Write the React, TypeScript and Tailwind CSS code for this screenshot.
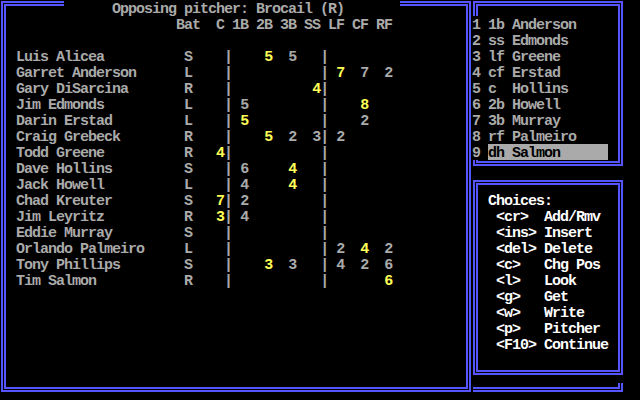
import React from 'react';

type Seg = [number, string, string?];

const Y = 'text-[#ffff55]';

function TextLine({ from, segs, className = '' }: { from: number; segs: Seg[]; className?: string }) {
  let cur = from;
  const out: React.ReactNode[] = [];
  segs.forEach(([c, t, cls], i) => {
    if (c > cur) out.push(<span key={'s' + i}>{' '.repeat(c - cur)}</span>);
    out.push(
      <span key={'t' + i} className={cls}>
        {t}
      </span>
    );
    cur = c + t.length;
  });
  return <div className={'h-4 pt-[2px] whitespace-pre ' + className}>{out}</div>;
}

const POS_COLS = [27, 30, 33, 36, 39, 42, 45, 48];

const players: [string, string, [number, string, number][]][] = [
  ['Luis Alicea', 'S', [[2, '5', 1], [3, '5', 0]]],
  ['Garret Anderson', 'L', [[5, '7', 1], [6, '7', 0], [7, '2', 0]]],
  ['Gary DiSarcina', 'R', [[4, '4', 1]]],
  ['Jim Edmonds', 'L', [[1, '5', 0], [6, '8', 1]]],
  ['Darin Erstad', 'L', [[1, '5', 1], [6, '2', 0]]],
  ['Craig Grebeck', 'R', [[2, '5', 1], [3, '2', 0], [4, '3', 0], [5, '2', 0]]],
  ['Todd Greene', 'R', [[0, '4', 1]]],
  ['Dave Hollins', 'S', [[1, '6', 0], [3, '4', 1]]],
  ['Jack Howell', 'L', [[1, '4', 0], [3, '4', 1]]],
  ['Chad Kreuter', 'S', [[0, '7', 1], [1, '2', 0]]],
  ['Jim Leyritz', 'R', [[0, '3', 1], [1, '4', 0]]],
  ['Eddie Murray', 'S', []],
  ['Orlando Palmeiro', 'L', [[5, '2', 0], [6, '4', 1], [7, '2', 0]]],
  ['Tony Phillips', 'S', [[2, '3', 1], [3, '3', 0], [5, '4', 0], [6, '2', 0], [7, '6', 0]]],
  ['Tim Salmon', 'R', [[7, '6', 1]]],
];

function playerSegs(name: string, bat: string, marks: [number, string, number][]): Seg[] {
  const segs: Seg[] = [
    [2, name],
    [23, bat],
    [28, '|'],
    [40, '|'],
  ];
  marks.forEach(([p, d, y]) => segs.push([POS_COLS[p], d, y ? Y : undefined]));
  segs.sort((a, b) => a[0] - b[0]);
  return segs;
}

const lineup: [string, string, string][] = [
  ['1', '1b', 'Anderson'],
  ['2', 'ss', 'Edmonds'],
  ['3', 'lf', 'Greene'],
  ['4', 'cf', 'Erstad'],
  ['5', 'c ', 'Hollins'],
  ['6', '2b', 'Howell'],
  ['7', '3b', 'Murray'],
  ['8', 'rf', 'Palmeiro'],
  ['9', 'dh', 'Salmon'],
];

const choices = [
  ' <cr>  Add/Rmv',
  ' <ins> Insert',
  ' <del> Delete',
  ' <c>   Chg Pos',
  ' <l>   Look',
  ' <g>   Get',
  ' <w>   Write',
  ' <p>   Pitcher',
  ' <F10> Continue',
];

export default function App() {
  return (
    <div className="w-[640px] h-[400px] bg-black flex items-start overflow-hidden font-['Liberation_Mono',monospace] text-[15px] leading-4 tracking-[-1px] text-[#aaaaaa] font-bold">
      {/* Main frame */}
      <div className="ml-px mt-px w-[470px] h-[391px] shrink-0 border-[5px] border-double border-[#5555ff] flex flex-col">
        <div className="-mt-[6px] ml-[58px] w-[336px] h-4 pt-[2px] shrink-0 bg-black whitespace-pre">
          {'      Opposing pitcher: Brocail (R)'}
        </div>
        <TextLine from={1} className="pl-[2px]" segs={[[22, 'Bat  C 1B 2B 3B SS LF CF RF']]} />
        <div className="h-4" />
        {players.map(([n, b, m]) => (
          <TextLine key={n} from={1} className="pl-[2px]" segs={playerSegs(n, b, m)} />
        ))}
      </div>

      {/* Right column */}
      <div className="ml-[2px] w-[150px] shrink-0 flex flex-col">
        <div className="mt-px h-[165px] border-[5px] border-double border-[#5555ff] pt-[10px]">
          {lineup.map(([n, p, name]) => (
            <div key={n} className="h-4 -ml-[6px] flex whitespace-pre">
              <span className="w-2 h-4 pt-[2px] bg-black">{n}</span>
              <span className="w-2 h-4"> </span>
              {n === '9' ? (
                <span className="w-[120px] h-4 pt-[2px] bg-[#aaaaaa] text-black">{p + ' ' + name}</span>
              ) : (
                <span className="h-4 pt-[2px]">{p + ' ' + name}</span>
              )}
            </div>
          ))}
        </div>

        <div className="mt-[14px] h-[195px] border-[5px] border-double border-[#5555ff] pt-[7px] pl-[10px] text-white">
          <div className="h-4 pt-[2px] whitespace-pre">Choices:</div>
          {choices.map((c) => (
            <div key={c} className="h-4 pt-[2px] whitespace-pre">
              {c}
            </div>
          ))}
        </div>

        <div className="mt-[8px] h-[9px] border-b-[5px] border-r-[5px] border-double border-[#5555ff]" />
      </div>
    </div>
  );
}
